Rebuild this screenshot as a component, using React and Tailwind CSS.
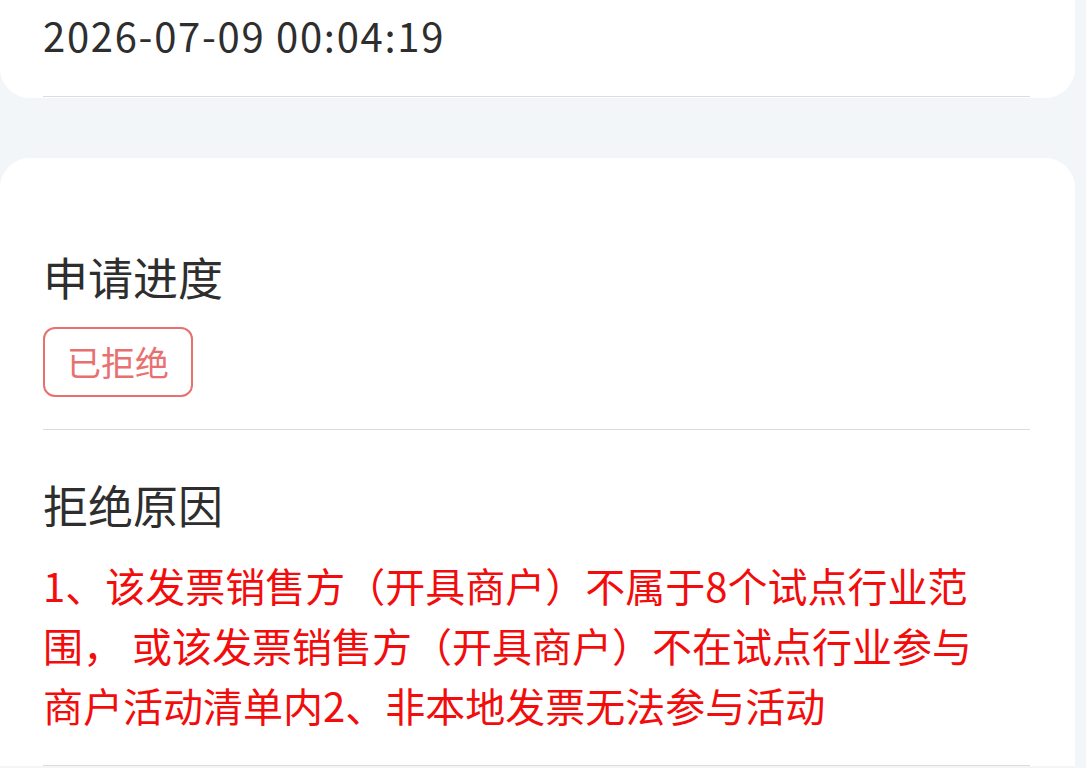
export default function App() {
  const reason = [
    "1、该发票销售方（开具商户）不属于8个试点行业范",
    "围， 或该发票销售方（开具商户）不在试点行业参与",
    "商户活动清单内2、非本地发票无法参与活动",
  ];

  return (
    <div className="min-h-screen w-full bg-[#f3f6f9] overflow-hidden pr-[11px] font-['Noto_Sans_CJK_SC','Noto_Sans',sans-serif]">
      {/* time card (scrolled partly off the top) */}
      <div className="bg-white rounded-b-[30px] pl-[43px] pr-[45px] pb-px">
        <div className="pt-[5px] pb-[31px] border-b border-[#dcdcdc]">
          <p className="text-[40px] leading-[60px] tracking-[1.7px] text-[#2e2e2e]">2026-07-09 00:04:19</p>
        </div>
      </div>

      {/* progress card */}
      <div className="mt-[60px] bg-white rounded-t-[30px] pl-[43px] pr-[45px]">
        <div className="pt-[89px] pb-[32px] border-b border-[#dcdcdc]">
          <h2 className="text-[45px] leading-[60px] text-[#2e2e2e]">申请进度</h2>
          <div className="mt-5 inline-flex h-[70px] items-center px-[22px] rounded-[12px] border-2 border-[#e8706f]">
            <span className="text-[34px] leading-none text-[#e8706f]">已拒绝</span>
          </div>
        </div>

        <div className="pt-[45px] pb-[30px] border-b border-[#dcdcdc]">
          <h2 className="text-[45px] leading-[60px] text-[#2e2e2e]">拒绝原因</h2>
          <p className="mt-5 text-[40px] leading-[60px] text-[#f20c0c]">
            {reason.map((line, i) => (
              <span key={i} className="block whitespace-pre">{line}</span>
            ))}
          </p>
        </div>
      </div>
    </div>
  );
}
